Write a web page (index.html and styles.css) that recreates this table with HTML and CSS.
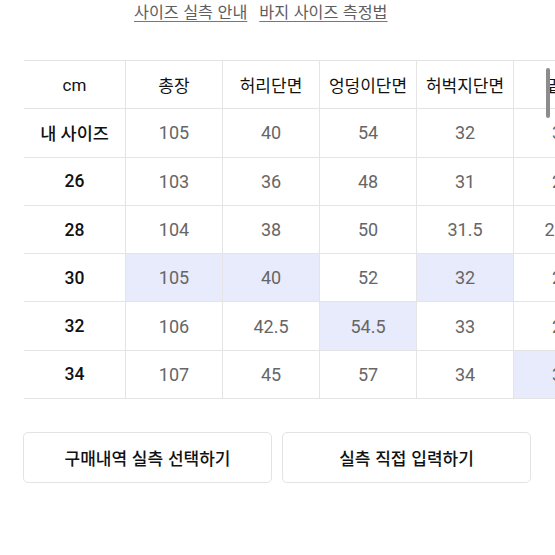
FILE: index.html
```html
<!DOCTYPE html>
<html lang="ko">
<head>
    <meta charset="UTF-8">
    <meta name="viewport" content="width=device-width, initial-scale=1.0">
    <title>사이즈 실측</title>
    <link rel="stylesheet" href="styles.css">
</head>
<body>
    <div class="links">
        <a href="#">사이즈 실측 안내</a>
        <a href="#">바지 사이즈 측정법</a>
    </div>

    <div class="table-wrap">
        <div class="size-table">
            <div class="cell head">cm</div>
            <div class="cell head">총장</div>
            <div class="cell head">허리단면</div>
            <div class="cell head">엉덩이단면</div>
            <div class="cell head">허벅지단면</div>
            <div class="cell head">밑위</div>
            <div class="cell head">밑단단면</div>

            <div class="cell label">내 사이즈</div>
            <div class="cell">105</div>
            <div class="cell">40</div>
            <div class="cell">54</div>
            <div class="cell">32</div>
            <div class="cell">30</div>
            <div class="cell">22</div>

            <div class="cell label">26</div>
            <div class="cell">103</div>
            <div class="cell">36</div>
            <div class="cell">48</div>
            <div class="cell">31</div>
            <div class="cell">28</div>
            <div class="cell">20</div>

            <div class="cell label">28</div>
            <div class="cell">104</div>
            <div class="cell">38</div>
            <div class="cell">50</div>
            <div class="cell">31.5</div>
            <div class="cell">28.5</div>
            <div class="cell">20.5</div>

            <div class="cell label">30</div>
            <div class="cell hit">105</div>
            <div class="cell hit">40</div>
            <div class="cell">52</div>
            <div class="cell hit">32</div>
            <div class="cell">29</div>
            <div class="cell">21</div>

            <div class="cell label">32</div>
            <div class="cell">106</div>
            <div class="cell">42.5</div>
            <div class="cell hit">54.5</div>
            <div class="cell">33</div>
            <div class="cell">29</div>
            <div class="cell">21.5</div>

            <div class="cell label">34</div>
            <div class="cell">107</div>
            <div class="cell">45</div>
            <div class="cell">57</div>
            <div class="cell">34</div>
            <div class="cell hit">30</div>
            <div class="cell">22</div>
        </div>
        <div class="scroll-thumb"></div>
    </div>

    <div class="actions">
        <button class="btn">구매내역 실측 선택하기</button>
        <button class="btn">실측 직접 입력하기</button>
    </div>
</body>
</html>
```

FILE: styles.css
```css
body {
    margin: 0;
    background: #fff;
    font-family: Roboto, "Noto Sans CJK KR", sans-serif;
    color: #111;
}
.links {
    display: flex;
    gap: 12px;
    padding-left: 134px;
    height: 26px;
    align-items: flex-start;
}
.links a {
    font-family: "Noto Sans CJK KR", sans-serif;
    font-size: 16.2px;
    line-height: 22px;
    color: #5e5e5e;
    text-decoration: underline;
    text-underline-offset: 3px;
    text-decoration-color: #777;
}
.table-wrap {
    position: relative;
    margin: 34px 0 0 24px;
    overflow: hidden;
}
.size-table {
    display: grid;
    grid-template-columns: 102px repeat(6, 97px);
    grid-auto-rows: 48.3px;
    width: max-content;
    border-top: 1px solid #e4e4e4;
}
.cell {
    box-sizing: border-box;
    display: flex;
    align-items: center;
    justify-content: center;
    border-right: 1px solid #e4e4e4;
    border-bottom: 1px solid #e4e4e4;
    font-size: 18px;
    color: #666;
}
.cell.head {
    font-family: Roboto, "Noto Sans CJK KR", sans-serif;
    font-size: 17px;
    color: #111;
}
.cell.label {
    font-family: Roboto, "Noto Sans CJK KR", sans-serif;
    font-size: 17.5px;
    font-weight: 500;
    color: #111;
}
.cell.hit {
    background: #e8ebfc;
}
.scroll-thumb {
    position: absolute;
    left: 522px;
    top: 8px;
    width: 4px;
    height: 50px;
    border-radius: 2px;
    background: #8c8c8c;
}
.actions {
    display: grid;
    grid-template-columns: 1fr 1fr;
    gap: 10px;
    margin: 33px 24px 0 23px;
}
.btn {
    height: 51px;
    background: #fff;
    border: 1px solid #e3e3e3;
    border-radius: 5px;
    font-family: "Noto Sans CJK KR", sans-serif;
    font-size: 17px;
    font-weight: 500;
    color: #111;
}
```
